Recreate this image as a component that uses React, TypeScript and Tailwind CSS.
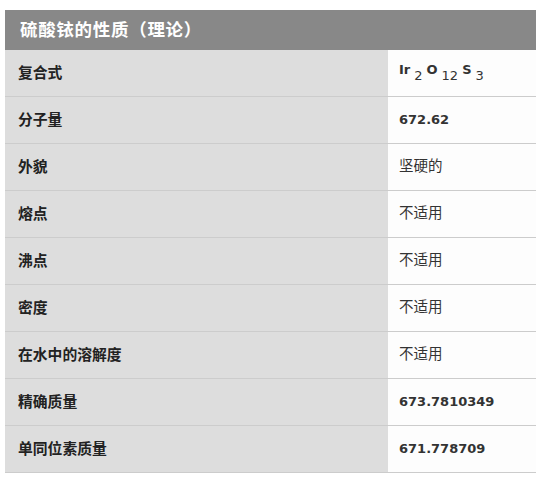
const sub = "inline-block align-[-6px] font-normal text-[13px] mx-[4px]";

const rows: { label: string; value: React.ReactNode }[] = [
  {
    label: "复合式",
    value: (
      <span className="font-bold text-[13px]">
        Ir<span className={sub}>2</span>O<span className={sub}>12</span>S<span className={sub}>3</span>
      </span>
    ),
  },
  { label: "分子量", value: <span className="font-bold text-[13px]">672.62</span> },
  { label: "外貌", value: "坚硬的" },
  { label: "熔点", value: "不适用" },
  { label: "沸点", value: "不适用" },
  { label: "密度", value: "不适用" },
  { label: "在水中的溶解度", value: "不适用" },
  { label: "精确质量", value: <span className="font-bold text-[13px]">673.7810349</span> },
  { label: "单同位素质量", value: <span className="font-bold text-[13px]">671.778709</span> },
];

export default function App() {
  return (
    <div
      className="w-[536px] h-[480px] bg-white pt-[10px] pl-[5px] overflow-hidden"
      style={{ fontFamily: '"Liberation Sans", "Noto Sans CJK SC", sans-serif' }}
    >
      <div className="w-[540px]">
        <div className="h-[40px] bg-[#888888] flex items-center pl-[15px] text-white text-[17.5px] font-bold tracking-[0.7px]">
          硫酸铱的性质（理论）
        </div>
        {rows.map((r) => (
          <div key={r.label} className="flex h-[47px] border-b border-[#cccccc]">
            <div className="w-[383px] bg-[#dddddd] flex items-center pl-[13px] text-[14.8px] font-bold text-[#222222]">
              {r.label}
            </div>
            <div
              className="flex-1 bg-[#fdfdfd] flex items-center pl-[11px] text-[14.5px] text-[#333333]"
              style={{ fontFamily: '"DejaVu Sans", "Noto Sans CJK SC", sans-serif' }}
            >
              {r.value}
            </div>
          </div>
        ))}
      </div>
    </div>
  );
}
